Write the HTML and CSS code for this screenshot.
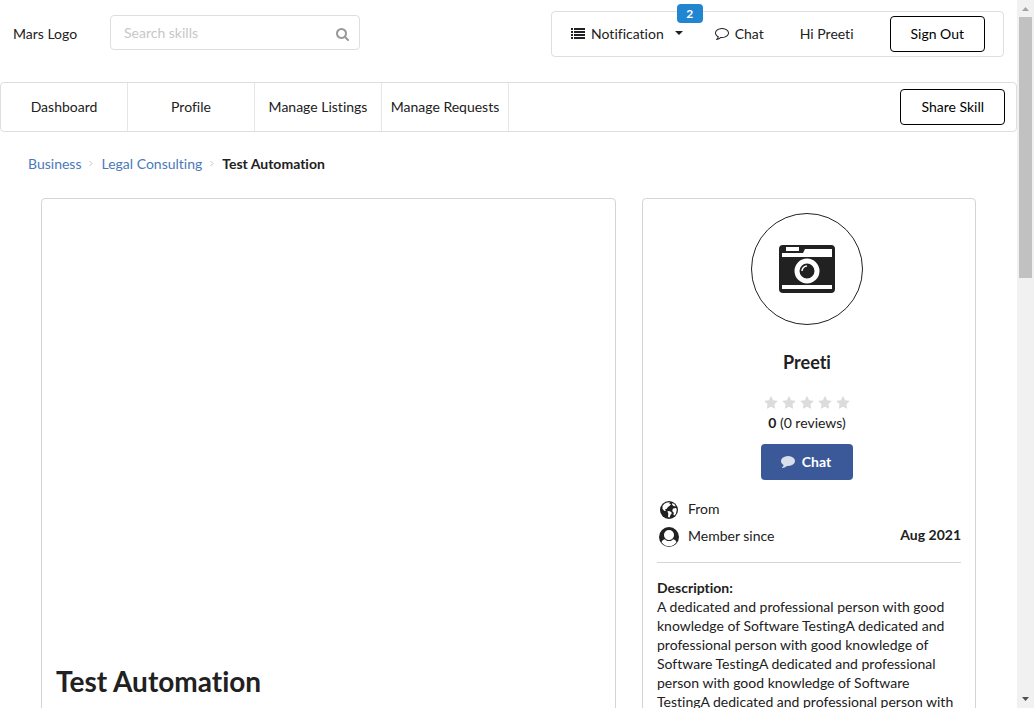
FILE: index.html
```html
<!DOCTYPE html>
<html lang="en">
<head>
<meta charset="utf-8">
<title>Test Automation</title>
<link rel="stylesheet" href="styles.css">
</head>
<body>
<svg class="defs" aria-hidden="true">
  <symbol id="star" viewBox="0 0 1792 1792"><path d="M1728 647q0 22-26 48l-363 354 86 500q1 7 1 20 0 21-10.500 35.500t-30.500 14.500q-19 0-40-12l-449-236-449 236q-22 12-40 12-21 0-31.500-14.500t-10.500-35.500q0-6 2-20l86-500-364-354q-25-27-25-48 0-37 56-46l502-73 225-455q19-41 49-41t49 41l225 455 502 73q56 9 56 46z"/></symbol>
</svg>
<div class="page">
  <header class="topbar">
    <span class="logo">Mars Logo</span>
    <form class="search">
      <input class="search-input" type="text" placeholder="Search skills" aria-label="Search skills">
      <svg class="search-icon" viewBox="0 0 1792 1792" aria-hidden="true"><path d="M1152 704q0-185-131.500-316.500t-316.500-131.500-316.500 131.500-131.500 316.500 131.500 316.500 316.500 131.500 316.500-131.500 131.500-316.500zm512 832q0 53-37.500 90.500t-90.500 37.500q-54 0-90-38l-343-342q-179 124-399 124-143 0-273.500-55.500t-225-150-150-225-55.500-273.500 55.500-273.500 150-225 225-150 273.500-55.500 273.500 55.500 225 150 150 225 55.500 273.500q0 220-124 399l343 343q37 37 37 90z"/></svg>
    </form>
    <div class="account">
      <button class="account-item notification" type="button">
        <svg class="icon" viewBox="0 0 14 14" aria-hidden="true"><path d="M0 2h2v2H0zM3 2h11v2H3zM0 5h2v2H0zM3 5h11v2H3zM0 8h2v2H0zM3 8h11v2H3zM0 11h2v2H0zM3 11h11v2H3z"/></svg>
        Notification
        <svg class="caret" viewBox="0 0 8 4" aria-hidden="true"><path d="M0 0h8L4 4z"/></svg>
        <span class="badge">2</span>
      </button>
      <a class="account-item chat-link" href="#">
        <svg class="icon" viewBox="0 0 1792 1792" aria-hidden="true"><path d="M896 384q-204 0-381.500 69.500t-282 187.500-104.500 255q0 112 71.500 213.500t201.500 175.500l87 50-27 96q-24 91-70 172 152-63 275-171l43-38 57 6q69 8 130 8 204 0 381.500-69.500t282-187.500 104.500-255-104.500-255-282-187.500-381.500-69.500zm896 512q0 174-120 321.500t-326 233-450 85.500q-70 0-145-8-198 175-460 242-49 14-114 22h-5q-15 0-27-10.500t-16-27.500v-1q-3-4-.5-12t2-10 4.500-9.500l6-9 7-8.500 8-9q7-8 31-34.500t34.500-38 31-39.500 32.500-51 27-59 26-76q-157-89-247.500-220t-90.500-281q0-174 120-321.500t326-233 450-85.500 450 85.500 326 233 120 321.500z"/></svg>
        Chat
      </a>
      <span class="account-item greeting">Hi Preeti</span>
      <button class="outline-button" type="button">Sign Out</button>
    </div>
  </header>

  <nav class="nav">
    <a class="nav-item" href="#">Dashboard</a>
    <a class="nav-item" href="#">Profile</a>
    <a class="nav-item" href="#">Manage Listings</a>
    <a class="nav-item" href="#">Manage Requests</a>
    <button class="outline-button share" type="button">Share Skill</button>
  </nav>

  <nav class="breadcrumb" aria-label="Breadcrumb">
    <a class="crumb" href="#">Business</a>
    <svg class="chevron" viewBox="0 0 4 7" aria-hidden="true"><path d="M.5 1l2.500 2.500L.5 6"/></svg>
    <a class="crumb" href="#">Legal Consulting</a>
    <svg class="chevron" viewBox="0 0 4 7" aria-hidden="true"><path d="M.5 1l2.500 2.500L.5 6"/></svg>
    <span class="crumb-current">Test Automation</span>
  </nav>

  <main class="columns">
    <section class="card">
      <div class="gallery"></div>
      <h1 class="title">Test Automation</h1>
    </section>
    <aside class="card">
      <div class="profile">
        <div class="avatar">
          <svg class="camera" viewBox="0 0 56 48" aria-hidden="true">
            <path fill-rule="evenodd" d="M4 0h48a4 4 0 0 1 4 4v40a4 4 0 0 1-4 4H4a4 4 0 0 1-4-4V4a4 4 0 0 1 4-4zM7 2v4h13V2zM3 8v4h50V4H26l-2 4zM3 40v4h50v-4z"/>
            <circle class="lens-ring" cx="28" cy="26" r="10"/>
            <path class="lens-glint" d="M23 26a5 5 0 0 1 5-5"/>
          </svg>
        </div>
        <h2 class="name">Preeti</h2>
        <div class="stars" role="img" aria-label="0 of 5 stars">
          <svg class="star"><use href="#star"/></svg>
          <svg class="star"><use href="#star"/></svg>
          <svg class="star"><use href="#star"/></svg>
          <svg class="star"><use href="#star"/></svg>
          <svg class="star"><use href="#star"/></svg>
        </div>
        <p class="reviews"><b>0</b> (0 reviews)</p>
        <button class="chat-button" type="button">
          <svg class="icon" viewBox="0 0 1792 1792" aria-hidden="true"><path d="M1792 896q0 174-120 321.500t-326 233-450 85.500q-70 0-145-8-198 175-460 242-49 14-114 22-17 2-30.500-9t-17.500-29v-1q-3-4-.5-12t2-10 4.500-9.500l6-9 7-8.500 8-9q7-8 31-34.500t34.500-38 31-39.500 32.500-51 27-59 26-76q-157-89-247.500-220t-90.500-281q0-130 71-248.500t191-204.500 286-136.500 348-50.500q244 0 450 85.500t326 233 120 321.500z"/></svg>
          Chat
        </button>
      </div>
      <dl class="facts">
        <div class="fact">
          <svg class="fact-icon" viewBox="0 0 20 20" aria-hidden="true">
            <circle cx="10" cy="10" r="9"/>
            <path class="land" d="M3.500 6Q5 3.200 8 2.500l3-.3-1 1.300 2 .5-1 1.500-2 1.500-1.500 2H6l1 1.500-1.500.5L3.500 9zM13.500 3l2.500 1.800.5 1.700-2-.5-1.500-1.500zM8.500 11l2.500.2L13 13l-1.500 2-1 2.500L9 17l.3-3zM14 8.500l3-.5.800 1.500-.8 4-1.500 2-1-.5.200-2.500-1.500-1.500z"/>
          </svg>
          <dt>From</dt><dd></dd>
        </div>
        <div class="fact">
          <svg class="fact-icon" viewBox="0 0 20 20" aria-hidden="true">
            <circle class="person-ring" cx="10" cy="10" r="9"/>
            <path fill-rule="evenodd" d="M10 0a10 10 0 1 1 0 20 10 10 0 0 1 0-20zM10 3a5 4.800 0 0 0-5 5c0 2.800 2.200 5 5 5s5-2.200 5-5a5 4.800 0 0 0-5-5zM5.800 12.200C3.800 12.700 2.700 14.300 2.500 15.300a9.200 9.200 0 0 0 15 0c-.2-1-1.300-2.600-3.300-3.100-2.300 2.500-6 2.500-8.400 0z"/>
          </svg>
          <dt>Member since</dt><dd>Aug 2021</dd>
        </div>
      </dl>
      <div class="description">
        <h3 class="description-title">Description:</h3>
        <p class="description-text">A dedicated and professional person with good knowledge of Software TestingA dedicated and professional person with good knowledge of Software TestingA dedicated and professional person with good knowledge of Software TestingA dedicated and professional person with good knowledge of Software Testing</p>
      </div>
    </aside>
  </main>
</div>
<div class="scrollbar" aria-hidden="true">
  <svg class="arrow arrow-up" viewBox="0 0 7 4"><path d="M0 4h7L3.500 0z"/></svg>
  <div class="track"><div class="thumb"></div></div>
  <svg class="arrow" viewBox="0 0 7 4"><path d="M0 0h7L3.500 4z"/></svg>
</div>
</body>
</html>
```
FILE: styles.css
```css
* { box-sizing: border-box; }

body {
  margin: 0;
  height: 100vh;
  overflow: hidden;
  display: flex;
  background: #fff;
  color: #212121;
  font: 14px/19px Lato, "Liberation Sans", sans-serif;
  font-variant-ligatures: none;
}

h1, h2, h3, p, dl, dd { margin: 0; }
a { color: inherit; text-decoration: none; }
button, input { font: inherit; font-variant-ligatures: none; color: inherit; }
button { cursor: pointer; }
svg { display: block; flex: none; fill: currentColor; }
.defs { position: absolute; width: 0; height: 0; }

.page { flex: 1; min-width: 0; }

.topbar {
  display: flex;
  align-items: flex-start;
  padding: 11px 13px 0;
}
.logo { width: 97px; padding-top: 13px; }
.search { position: relative; width: 250px; padding-top: 4px; }
.search-input {
  display: block;
  width: 100%;
  height: 35px;
  padding: 0 32px 0 13px;
  border: 1px solid #dedede;
  border-radius: 4px;
  outline: 0;
}
.search-input::placeholder { color: #c7c7c7; }
.search-icon {
  position: absolute;
  right: 10px;
  top: 17px;
  width: 14px;
  height: 14px;
  color: #999;
}
.account {
  display: flex;
  align-items: center;
  height: 46px;
  margin-left: auto;
  padding: 0 18px 0 19px;
  border: 1px solid #dedede;
  border-radius: 4px;
}
.account-item {
  display: flex;
  align-items: center;
  gap: 6px;
  padding: 0 0 2px;
}
.icon { width: 14px; height: 14px; }
.notification {
  position: relative;
  border: 0;
  background: none;
}
.caret { width: 8px; height: 4px; margin-left: 5px; }
.badge {
  position: absolute;
  right: -20px;
  top: -20px;
  width: 26px;
  border-radius: 4px;
  background: #2185d0;
  color: #fff;
  font-size: 12px;
  font-weight: 700;
  text-align: center;
}
.chat-link { margin-left: 32px; }
.greeting { margin-left: 36px; }

.outline-button {
  height: 36px;
  padding: 0 20px 2px;
  border: 1px solid #000;
  border-radius: 4px;
  background: #fff;
  color: #000;
}
.account .outline-button { margin-left: 36px; }

.nav {
  display: flex;
  align-items: center;
  height: 50px;
  margin-top: 25px;
  border: 1px solid #dedede;
  border-radius: 4px;
}
.nav-item {
  width: 127px;
  line-height: 48px;
  text-align: center;
  border-right: 1px solid #e6e6e6;
}
.share { margin: 0 11px 0 auto; }

.breadcrumb {
  display: flex;
  align-items: center;
  gap: 8px;
  padding: 22px 28px 0;
}
.crumb { color: #4a7ab8; }
.crumb-current { font-weight: 700; }
.chevron { width: 4px; height: 7px; fill: none; stroke: #c4c4c4; }

.columns {
  display: grid;
  grid-template-columns: 575fr 334fr;
  gap: 26px;
  padding: 25px 41px;
}
.card {
  padding: 14px;
  border: 1px solid #d4d4d5;
  border-radius: 4px;
}
.gallery { height: 450px; }
.title { font-size: 28px; line-height: 36px; }

.profile { padding-right: 4px; }
.avatar {
  display: flex;
  align-items: center;
  justify-content: center;
  width: 112px;
  height: 112px;
  margin: 0 auto;
  border: 1px solid #212121;
  border-radius: 50%;
}
.camera { width: 56px; height: 48px; }
.lens-ring { fill: none; stroke: #fff; stroke-width: 5; }
.lens-glint { fill: none; stroke: #fff; stroke-width: 1.5; }

.name {
  margin-top: 25px;
  font-size: 18px;
  line-height: 24px;
  text-align: center;
}
.stars { display: flex; justify-content: center; gap: 4px; margin-top: 22px; }
.star { width: 14px; height: 14px; color: #dcdcdc; }
.reviews { margin-top: 3px; text-align: center; }
.chat-button {
  display: flex;
  align-items: center;
  justify-content: center;
  gap: 7px;
  width: 92px;
  height: 36px;
  margin: 12px auto 0;
  padding: 0 2px 2px 0;
  border: 0;
  border-radius: 4px;
  background: #3b5998;
  color: #fff;
  font-weight: 700;
}
.chat-button .icon { color: #d8deea; }

.facts {
  margin-top: 16px;
  padding-bottom: 12px;
  border-bottom: 1px solid #d4d4d5;
}
.fact { display: flex; align-items: center; gap: 9px; height: 27px; padding-left: 2px; }
.fact-icon { width: 20px; height: 20px; }
.fact dt { padding-bottom: 2px; }
.fact dd { margin-left: auto; padding-bottom: 4px; font-weight: 700; }
.land, .person-ring { fill: #fff; }
.description { margin-top: 15px; }
.description-title { font-size: 14px; line-height: 19px; }

.scrollbar {
  display: flex;
  flex: none;
  flex-direction: column;
  align-items: center;
  width: 17px;
  padding: 7px 0;
  background: #f1f1f1;
}
.track { flex: 1; width: 13px; padding-top: 6px; }
.thumb { height: 38.4%; background: #c1c1c1; }
.arrow { width: 7px; height: 4px; color: #505050; }
.arrow-up { color: #a3a3a3; }
```
